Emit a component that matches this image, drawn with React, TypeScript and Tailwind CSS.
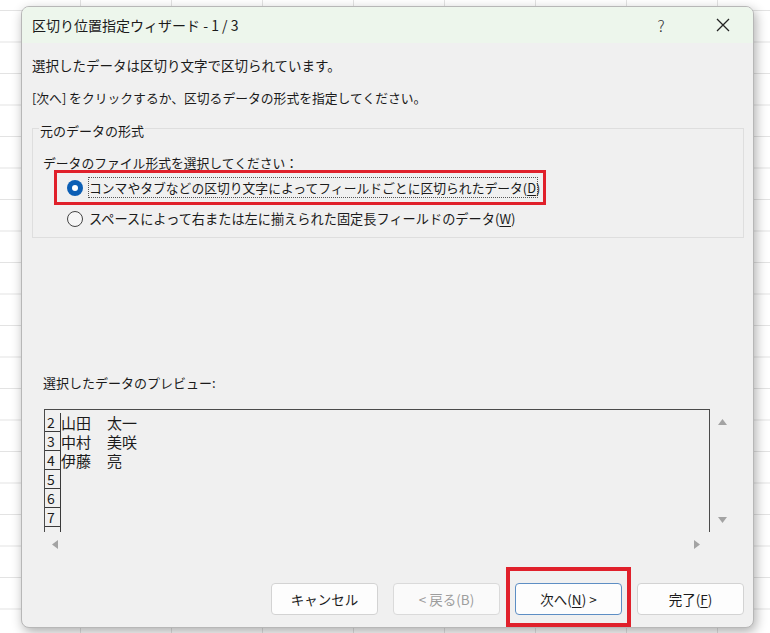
const rows = [
  { no: "2", last: "山田", first: "太一" },
  { no: "3", last: "中村", first: "美咲" },
  { no: "4", last: "伊藤", first: "亮" },
  { no: "5", last: "", first: "" },
  { no: "6", last: "", first: "" },
  { no: "7", last: "", first: "" },
  { no: "", last: "", first: "" },
];

function Arrow({ dir }: { dir: "up" | "down" | "left" | "right" }) {
  const points = {
    up: "0,7 4.5,1 9,7",
    down: "0,1 4.5,7 9,1",
    left: "7,0 1,4.5 7,9",
    right: "1,0 7,4.5 1,9",
  }[dir];
  const size = dir === "up" || dir === "down" ? { w: 9, h: 8 } : { w: 8, h: 9 };
  return (
    <svg width={size.w} height={size.h} viewBox={`0 0 ${size.w} ${size.h}`}>
      <polygon points={points} fill="#a3a3a3" />
    </svg>
  );
}

export default function App() {
  return (
    <div className="min-h-[633px] w-full bg-white pl-[21px] pt-[6px] [background-image:linear-gradient(to_right,#e3e3e3_1px,transparent_1px),linear-gradient(to_bottom,#e3e3e3_1px,transparent_1px)] [background-size:91px_31.5px] [background-position:80px_10px] font-['Noto_Sans_CJK_JP','Noto_Sans',sans-serif] text-[13px] text-[#1b1b1b]">
      <div className="flex h-[622px] w-[733px] flex-col rounded-[8px] border border-[#b7b7b7] bg-[#f0f0f0] shadow-[2px_4px_12px_rgba(0,0,0,0.32)]">
        {/* Title bar */}
        <div className="flex h-[36px] items-center rounded-t-[7px] bg-[#edf6ec] pl-[10px]">
          <span className="whitespace-pre text-[14px] leading-[20px]">区切り位置指定ウィザード - 1 / 3</span>
          <div className="ml-auto mr-[7px] flex items-center gap-[16px]">
            <span className="flex w-[46px] justify-center text-[16px] font-light text-[#333]">?</span>
            <span className="flex w-[46px] justify-center">
              <svg width="14" height="14" viewBox="0 0 14 14">
                <path d="M1 1L13 13M13 1L1 13" stroke="#222" strokeWidth="1.3" />
              </svg>
            </span>
          </div>
        </div>

        {/* Body */}
        <div className="flex flex-1 flex-col pl-[10px] pr-[9px]">
          <p className="mt-[12px] text-[13.5px] leading-[20px]">選択したデータは区切り文字で区切られています。</p>
          <p className="mt-[13px] text-[12.8px] leading-[20px]">[次へ] をクリックするか、区切るデータの形式を指定してください。</p>

          {/* Group box */}
          <div className="relative mt-[20px] h-[110px] w-[712px] border border-[#dedede]">
            <span className="absolute -top-[7px] left-[6px] bg-[#f0f0f0] px-[1px] leading-[18px]">元のデータの形式</span>
            <p className="ml-[10px] mt-[25px] text-[12.8px] leading-[18px]">データのファイル形式を選択してください：</p>
            <div className="-mt-[2px] ml-[21px] flex h-[35px] w-[492px] items-center border-[3px] border-[#e0202b]">
              <span className="ml-[10px] flex h-[16px] w-[16px] shrink-0 items-center justify-center rounded-full bg-[#0c5fb5]">
                <span className="h-[6px] w-[6px] rounded-full bg-white" />
              </span>
              <span className="ml-[5px] block h-[21px] w-[450px] shrink-0 whitespace-nowrap border border-dotted border-[#555] text-[12.8px] leading-[19px]">
                コンマやタブなどの区切り文字によってフィールドごとに区切られたデータ(<span className="underline underline-offset-2">D</span>)
              </span>
            </div>
            <div className="ml-[34px] mt-[3px] flex h-[22px] items-center">
              <span className="h-[16px] w-[16px] shrink-0 rounded-full border border-[#444] bg-[#f6f6f6]" />
              <span className="ml-[6px] whitespace-nowrap text-[13.2px] leading-[18px]">
                スペースによって右または左に揃えられた固定長フィールドのデータ(<span className="underline underline-offset-2">W</span>)
              </span>
            </div>
          </div>

          {/* Preview */}
          <p className="ml-[11px] mt-[135px] leading-[20px]">選択したデータのプレビュー:</p>
          <div className="mt-[16px] flex">
            <div className="ml-[12px] h-[123px] w-[666px] overflow-hidden border-x border-t border-[#4a4a4a] border-b-white">
              <div className="pt-[3px]">
                {rows.map((r, i) => (
                  <div key={i} className="flex h-[19px]">
                    <span className="w-[16px] border-b border-r border-[#3a3a3a] pl-[2px] text-[14px] leading-[18px]">
                      {r.no}
                    </span>
                    <span className="w-[46px] text-[15px] leading-[19px]">{r.last}</span>
                    <span className="text-[15px] leading-[19px]">{r.first}</span>
                  </div>
                ))}
              </div>
            </div>
            <div className="flex h-[123px] w-[25px] flex-col items-center justify-between pb-[8px] pt-[9px]">
              <Arrow dir="up" />
              <Arrow dir="down" />
            </div>
          </div>
          <div className="ml-[12px] flex h-[24px] w-[666px] items-center justify-between pl-[7px] pr-[9px]">
            <Arrow dir="left" />
            <Arrow dir="right" />
          </div>

          {/* Buttons */}
          <div className="mb-[12px] mt-auto flex justify-end gap-[15px]">
            <button className="h-[32px] w-[107px] rounded-[4px] border border-[#d3d3d3] bg-[#fdfdfd] text-[13.5px] leading-[20px]">
              キャンセル
            </button>
            <button className="h-[32px] w-[107px] rounded-[4px] border border-[#dadada] bg-[#fafafa] text-[13.5px] leading-[20px] text-[#9d9d9d]">
              &lt; 戻る(B)
            </button>
            <div className="relative">
              <button className="h-[32px] w-[107px] rounded-[4px] border border-[#5d8ec4] bg-[#fdfdfd] text-[13.5px] leading-[20px]">
                次へ(<span className="underline underline-offset-2">N</span>) &gt;
              </button>
              <span className="pointer-events-none absolute -bottom-[12px] -left-[9px] -right-[9px] -top-[16px] border-[4px] border-[#e0202b]" />
            </div>
            <button className="h-[32px] w-[107px] rounded-[4px] border border-[#d3d3d3] bg-[#fdfdfd] text-[13.5px] leading-[20px]">
              完了(<span className="underline underline-offset-2">F</span>)
            </button>
          </div>
        </div>
      </div>
    </div>
  );
}
